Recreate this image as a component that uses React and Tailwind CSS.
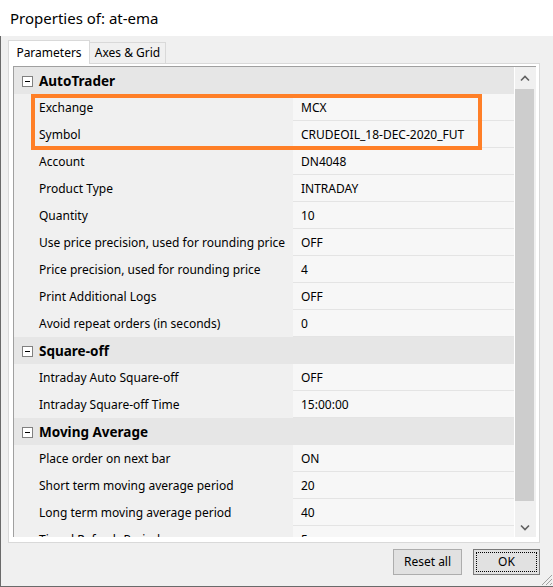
import React from 'react'

const sections = [
  {
    title: 'AutoTrader',
    rows: [
      ['Exchange', 'MCX'],
      ['Symbol', 'CRUDEOIL_18-DEC-2020_FUT'],
      ['Account', 'DN4048'],
      ['Product Type', 'INTRADAY'],
      ['Quantity', '10'],
      ['Use price precision, used for rounding price', 'OFF'],
      ['Price precision, used for rounding price', '4'],
      ['Print Additional Logs', 'OFF'],
      ['Avoid repeat orders (in seconds)', '0'],
    ],
  },
  {
    title: 'Square-off',
    rows: [
      ['Intraday Auto Square-off', 'OFF'],
      ['Intraday Square-off Time', '15:00:00'],
    ],
  },
  {
    title: 'Moving Average',
    rows: [
      ['Place order on next bar', 'ON'],
      ['Short term moving average period', '20'],
      ['Long term moving average period', '40'],
      ['Timed Refresh Period', '5'],
    ],
  },
]

const CategoryRow = ({ title }) => (
  <div className="flex h-[27px] shrink-0 items-center bg-[#e6e6e6] pt-px">
    <div className="ml-[8px] mr-[6px] flex h-[11px] w-[11px] items-center justify-center border border-[#808080] bg-white">
      <div className="h-px w-[5px] bg-black" />
    </div>
    <span className="text-[13.5px] font-bold text-black">{title}</span>
  </div>
)

const PropRow = ({ name, value }) => (
  <div className="flex h-[27px] shrink-0">
    <div className="flex w-[279px] items-center bg-[#f0f0f0] pl-[25px] pt-px text-black">
      <span className="whitespace-nowrap">{name}</span>
    </div>
    <div className="flex flex-1 items-center border-b border-[#e4e4e4] bg-[#f7f7f7] pl-[8px] pt-px text-black">
      <span className="whitespace-nowrap">{value}</span>
    </div>
  </div>
)

const Chevron = ({ down }) => (
  <svg width="10" height="7" viewBox="0 0 10 7">
    <path
      d={down ? 'M1 1.5 L5 5.5 L9 1.5' : 'M1 5.5 L5 1.5 L9 5.5'}
      fill="none"
      stroke="#606060"
      strokeWidth="1.6"
    />
  </svg>
)

export default function App() {
  return (
    <div
      className="relative flex h-[587px] w-[553px] flex-col overflow-hidden bg-[#f0f0f0] text-[12px]"
      style={{ fontFamily: '"Noto Sans", "Open Sans", sans-serif' }}
    >
      {/* Title bar */}
      <div className="flex h-[36px] shrink-0 items-center bg-white pl-[10px] text-[15px] text-black">
        Properties of: at-ema
      </div>

      <div className="flex flex-1 flex-col border-b border-l border-[#6a6a6a]">
        {/* Tabs */}
        <div className="relative z-10 flex h-[27px] shrink-0 items-end pl-[7px]">
          <div className="-mb-px flex h-[24px] w-[82px] items-center justify-center border border-b-0 border-[#d9d9d9] bg-white">
            Parameters
          </div>
          <div className="flex h-[21px] w-[76px] items-center justify-center border border-b-0 border-l-0 border-[#d9d9d9] bg-[#f0f0f0]">
            Axes &amp; Grid
          </div>
        </div>

        {/* Tab panel */}
        <div className="ml-[7px] h-[480px] w-[532px] border border-[#d9d9d9] bg-white pl-[4px] pt-[2px]">
          <div className="flex h-[471px] w-[523px] border-l border-t border-[#a0a0a0] bg-[#f0f0f0]">
            <div className="flex flex-1 flex-col overflow-hidden">
              {sections.map((s) => (
                <React.Fragment key={s.title}>
                  <CategoryRow title={s.title} />
                  {s.rows.map(([n, v]) => (
                    <PropRow key={n} name={n} value={v} />
                  ))}
                </React.Fragment>
              ))}
            </div>
            {/* Scrollbar */}
            <div className="flex w-[22px] flex-col border-l border-white bg-[#f0f0f0]">
              <div className="flex h-[22px] items-center justify-center pr-[2px]">
                <Chevron />
              </div>
              <div className="mr-[2px] h-[412px] bg-[#cdcdcd]" />
              <div className="flex flex-1 items-end justify-center pb-[6px] pr-[2px]">
                <Chevron down />
              </div>
            </div>
          </div>
        </div>

        {/* Buttons */}
        <div className="flex justify-end gap-[11px] pr-[13px] pt-[6px]">
          <button className="h-[26px] w-[69px] border border-[#adadad] bg-[#e1e1e1] text-black">
            Reset all
          </button>
          <button className="flex h-[26px] w-[67px] items-center justify-center border border-[#7a7a7a] bg-[#e1e1e1] p-[2px] text-black">
            <span className="flex h-full w-full items-center justify-center border border-dotted border-black">
              OK
            </span>
          </button>
        </div>
      </div>

      {/* Highlight annotation */}
      <div className="pointer-events-none absolute left-[31px] top-[94px] h-[56px] w-[451px] border-[4px] border-[#ff7f27]" />

      {/* Resize grip */}
      <svg className="absolute bottom-[1px] right-0" width="14" height="14" viewBox="0 0 14 14">
        <path d="M13 3 L3 13 M13 7 L7 13 M13 11 L11 13" stroke="#a0a0a0" strokeWidth="1" />
      </svg>
    </div>
  )
}
